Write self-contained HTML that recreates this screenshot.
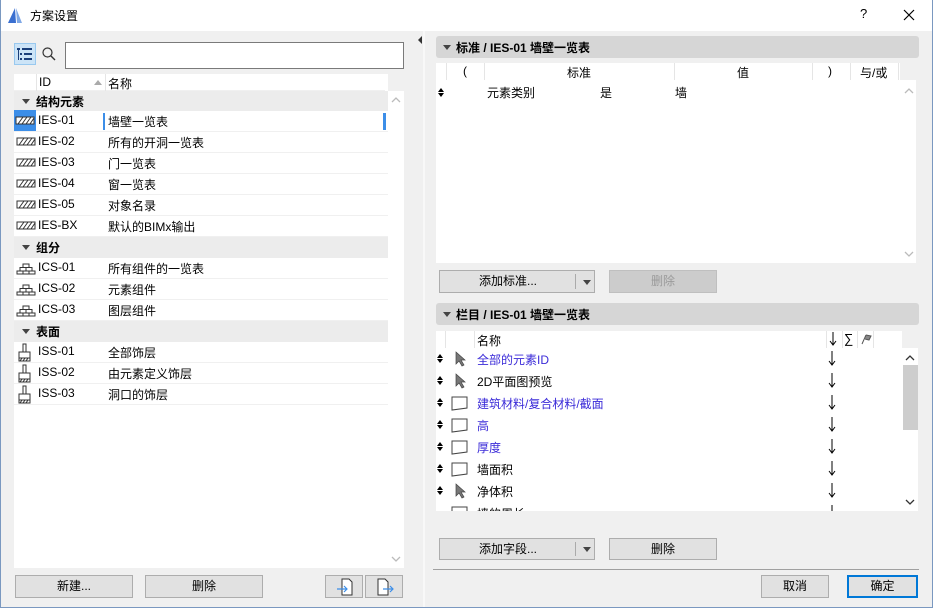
<!DOCTYPE html>
<html><head><meta charset="utf-8"><style>
*{box-sizing:border-box;margin:0;padding:0}
body{width:933px;height:608px;overflow:hidden;background:#f0f0f0;font-family:"Liberation Sans","Noto Sans CJK SC",sans-serif;font-size:12px;color:#000;position:relative}
.a{position:absolute}
.win{position:absolute;left:0;top:0;width:933px;height:608px;border:1px solid #7a98c0;border-top:none}
.title{left:0;top:0;width:933px;height:31px;background:#fff}
.white{background:#fff}
.row{position:absolute;left:14px;width:374px;height:21px;border-bottom:1px solid #f0f0f0;background:#fff}
.row .id{position:absolute;left:24px;top:2px}
.row .nm{position:absolute;left:94px;top:2px}
.row .ic{position:absolute;left:2px;top:5px}
.cat{position:absolute;left:14px;width:374px;height:21px;background:#ececec;font-weight:bold}
.cat span{position:absolute;left:22px;top:2px}
.tri{position:absolute;width:0;height:0;border-left:4px solid transparent;border-right:4px solid transparent;border-top:5px solid #444}
.btn{position:absolute;background:#e1e1e1;border:1px solid #adadad;text-align:center;line-height:21px}
.hdr{position:absolute;left:436px;width:483px;height:22px;background:#d6d6d6;border-radius:3px;font-weight:bold}
.hdr span{position:absolute;left:20px;top:3px}
.r2{position:absolute;left:451px;height:22px;width:449px}
.r2 .ud{position:absolute;left:-14px;top:6px}
.r2 .t{position:absolute;left:26px;top:3px}
.r2 .dn{position:absolute;left:377px;top:3px}
.blue{color:#3a2ad8}
</style></head><body>
<div class="a title"></div>
<svg class="a" style="left:6px;top:6px" width="18" height="18"><path d="M2 17 L9 2 L10 17Z" fill="#3a6fd0"/><path d="M10 2 L16 17 L11 17Z" fill="#7fa8e6"/></svg>
<div class="a" style="left:30px;top:7px;font-size:12px">方案设置</div>
<div class="a" style="left:860px;top:6px;font-size:13px">?</div>
<svg class="a" style="left:903px;top:9px" width="12" height="12"><path d="M1 1L11 11M11 1L1 11" stroke="#000" stroke-width="1.2"/></svg>

<div class="a" style="left:14px;top:43px;width:22px;height:22px;background:#cce4f7;border:1px solid #99c9ef"></div>
<svg class="a" style="left:16px;top:46px" width="18" height="16"><g fill="#1a3f7a"><rect x="1" y="2" width="3" height="2"/><rect x="6" y="2" width="10" height="2"/><rect x="4" y="7" width="2" height="2"/><rect x="8" y="7" width="8" height="2"/><rect x="4" y="12" width="2" height="2"/><rect x="8" y="12" width="8" height="2"/><rect x="2" y="4" width="1" height="10"/></g></svg>
<svg class="a" style="left:41px;top:46px" width="16" height="16"><circle cx="6.5" cy="6.5" r="4.5" fill="none" stroke="#333" stroke-width="1.2"/><path d="M10 10L14 14" stroke="#333" stroke-width="1.4"/></svg>
<div class="a white" style="left:65px;top:42px;width:339px;height:27px;border:1px solid #7a7a7a"></div>

<div class="a white" style="left:14px;top:74px;width:374px;height:494px"></div>
<div class="a" style="left:14px;top:74px;width:371px;height:17px;background:#fff;border-bottom:1px solid #f0f0f0"></div>
<div class="a" style="left:36px;top:74px;width:1px;height:17px;background:#e5e5e5"></div>
<div class="a" style="left:105px;top:74px;width:1px;height:17px;background:#e5e5e5"></div>
<div class="a" style="left:39px;top:75px">ID</div>
<div class="a" style="left:94px;top:80px;width:0;height:0;border-left:4px solid transparent;border-right:4px solid transparent;border-bottom:5px solid #aaa"></div>
<div class="a" style="left:108px;top:75px">名称</div>
<div class="a" style="left:388px;top:91px;width:16px;height:477px;background:#fff"></div>
<svg class="a" style="left:391px;top:96px" width="10" height="8"><path d="M1 6l4-4 4 4" fill="none" stroke="#bbb" stroke-width="1.3"/></svg>
<svg class="a" style="left:391px;top:555px" width="10" height="8"><path d="M1 2l4 4 4-4" fill="none" stroke="#bbb" stroke-width="1.3"/></svg>

<div class="cat" style="top:91px"><div class="tri" style="left:8px;top:8px"></div><span>结构元素</span></div>
<div class="row" style="top:111px"><svg class="ic" style="left:0;top:-1px" width="22" height="21"><rect width="22" height="21" fill="#3c8ee8"/><rect x="2" y="7" width="18" height="7" fill="#fff" stroke="#333"/><path d="M4 14l5-7M8 14l5-7M12 14l5-7M16 14l4-6" stroke="#333"/></svg><span class="id">IES-01</span><div class="a" style="left:89px;top:2px;width:2px;height:17px;background:#3c8ee8"></div><div class="a" style="left:369px;top:2px;width:3px;height:17px;background:#3c8ee8"></div><span class="nm">墙壁一览表</span></div>
<div class="row" style="top:132px"><svg class="ic" width="20" height="10"><rect x="1" y="1" width="18" height="7" fill="#fff" stroke="#333"/><path d="M3 8l5-7M7 8l5-7M11 8l5-7M15 8l4-6" stroke="#333"/></svg><span class="id">IES-02</span><span class="nm">所有的开洞一览表</span></div>
<div class="row" style="top:153px"><svg class="ic" width="20" height="10"><rect x="1" y="1" width="18" height="7" fill="#fff" stroke="#333"/><path d="M3 8l5-7M7 8l5-7M11 8l5-7M15 8l4-6" stroke="#333"/></svg><span class="id">IES-03</span><span class="nm">门一览表</span></div>
<div class="row" style="top:174px"><svg class="ic" width="20" height="10"><rect x="1" y="1" width="18" height="7" fill="#fff" stroke="#333"/><path d="M3 8l5-7M7 8l5-7M11 8l5-7M15 8l4-6" stroke="#333"/></svg><span class="id">IES-04</span><span class="nm">窗一览表</span></div>
<div class="row" style="top:195px"><svg class="ic" width="20" height="10"><rect x="1" y="1" width="18" height="7" fill="#fff" stroke="#333"/><path d="M3 8l5-7M7 8l5-7M11 8l5-7M15 8l4-6" stroke="#333"/></svg><span class="id">IES-05</span><span class="nm">对象名录</span></div>
<div class="row" style="top:216px"><svg class="ic" width="20" height="10"><rect x="1" y="1" width="18" height="7" fill="#fff" stroke="#333"/><path d="M3 8l5-7M7 8l5-7M11 8l5-7M15 8l4-6" stroke="#333"/></svg><span class="id">IES-BX</span><span class="nm">默认的BIMx输出</span></div>
<div class="cat" style="top:237px"><div class="tri" style="left:8px;top:8px"></div><span>组分</span></div>
<div class="row" style="top:258px"><svg class="ic" width="20" height="12"><path d="M7 1h6v3.5H7zM4 4.5h12v3.5H4zM1 8h18v3H1zM10 4.5v3.5M7 8v3M13 8v3" fill="none" stroke="#333"/></svg><span class="id">ICS-01</span><span class="nm">所有组件的一览表</span></div>
<div class="row" style="top:279px"><svg class="ic" width="20" height="12"><path d="M7 1h6v3.5H7zM4 4.5h12v3.5H4zM1 8h18v3H1zM10 4.5v3.5M7 8v3M13 8v3" fill="none" stroke="#333"/></svg><span class="id">ICS-02</span><span class="nm">元素组件</span></div>
<div class="row" style="top:300px"><svg class="ic" width="20" height="12"><path d="M7 1h6v3.5H7zM4 4.5h12v3.5H4zM1 8h18v3H1zM10 4.5v3.5M7 8v3M13 8v3" fill="none" stroke="#333"/></svg><span class="id">ICS-03</span><span class="nm">图层组件</span></div>
<div class="cat" style="top:321px"><div class="tri" style="left:8px;top:8px"></div><span>表面</span></div>
<div class="row" style="top:342px"><svg class="ic" style="top:1px" width="20" height="20"><path d="M7 1h3v8H7zM3 9h11v6H3zM3 15h11v3H3z" fill="#fff" stroke="#333"/><path d="M4 18l2-3M7 18l2-3M10 18l2-3" stroke="#333"/></svg><span class="id">ISS-01</span><span class="nm">全部饰层</span></div>
<div class="row" style="top:363px"><svg class="ic" style="top:1px" width="20" height="20"><path d="M7 1h3v8H7zM3 9h11v6H3zM3 15h11v3H3z" fill="#fff" stroke="#333"/><path d="M4 18l2-3M7 18l2-3M10 18l2-3" stroke="#333"/></svg><span class="id">ISS-02</span><span class="nm">由元素定义饰层</span></div>
<div class="row" style="top:384px"><svg class="ic" style="top:1px" width="20" height="20"><path d="M7 1h3v8H7zM3 9h11v6H3zM3 15h11v3H3z" fill="#fff" stroke="#333"/><path d="M4 18l2-3M7 18l2-3M10 18l2-3" stroke="#333"/></svg><span class="id">ISS-03</span><span class="nm">洞口的饰层</span></div>

<div class="btn" style="left:15px;top:575px;width:118px;height:23px">新建...</div>
<div class="btn" style="left:145px;top:575px;width:118px;height:23px">删除</div>
<div class="btn" style="left:325px;top:575px;width:38px;height:23px"><svg style="position:absolute;left:9px;top:2px" width="20" height="18"><path d="M7 1h7l3 3v13H7z" fill="#fff" stroke="#333"/><path d="M2 11h10M9 8l3 3-3 3" fill="none" stroke="#3c8ee8" stroke-width="1.2"/></svg></div>
<div class="btn" style="left:365px;top:575px;width:38px;height:23px"><svg style="position:absolute;left:9px;top:2px" width="20" height="18"><path d="M3 1h7l3 3v13H3z" fill="#fff" stroke="#333"/><path d="M8 11h10M15 8l3 3-3 3" fill="none" stroke="#3c8ee8" stroke-width="1.2"/></svg></div>

<div class="a" style="left:423px;top:31px;width:2px;height:577px;background:#f8f8f8"></div>
<div class="a" style="left:418px;top:36px;width:0;height:0;border-top:4px solid transparent;border-bottom:4px solid transparent;border-right:4px solid #333"></div>

<div class="hdr" style="top:36px"><div class="tri" style="left:7px;top:9px"></div><span>标准 / IES-01 墙壁一览表</span></div>
<div class="a white" style="left:436px;top:63px;width:464px;height:200px"></div>
<div class="a white" style="left:900px;top:80px;width:16px;height:183px"></div>
<svg class="a" style="left:904px;top:87px" width="10" height="8"><path d="M1 6l4-4 4 4" fill="none" stroke="#bbb" stroke-width="1.3"/></svg>
<svg class="a" style="left:904px;top:250px" width="10" height="8"><path d="M1 2l4 4 4-4" fill="none" stroke="#bbb" stroke-width="1.3"/></svg>
<div class="a" style="left:446px;top:63px;width:453px;height:17px;background:#fff"></div>
<div class="a" style="left:446px;top:63px;width:1px;height:17px;background:#e5e5e5"></div>
<div class="a" style="left:484px;top:63px;width:1px;height:17px;background:#e5e5e5"></div>
<div class="a" style="left:674px;top:63px;width:1px;height:17px;background:#e5e5e5"></div>
<div class="a" style="left:812px;top:63px;width:1px;height:17px;background:#e5e5e5"></div>
<div class="a" style="left:850px;top:63px;width:1px;height:17px;background:#e5e5e5"></div>
<div class="a" style="left:898px;top:63px;width:1px;height:17px;background:#e5e5e5"></div>
<div class="a" style="left:463px;top:64px">(</div>
<div class="a" style="left:567px;top:64px">标准</div>
<div class="a" style="left:737px;top:64px">值</div>
<div class="a" style="left:828px;top:64px">)</div>
<div class="a" style="left:860px;top:64px">与/或</div>
<svg class="a" style="left:438px;top:88px" width="6" height="9"><path d="M0 4L3 0L6 4ZM0 5L3 9L6 5Z" fill="#000"/></svg>
<div class="a" style="left:487px;top:84px">元素类别</div>
<div class="a" style="left:600px;top:84px">是</div>
<div class="a" style="left:675px;top:84px">墙</div>

<div class="btn" style="left:439px;top:270px;width:156px;height:23px"><span style="position:absolute;left:0;width:136px">添加标准...</span><div class="a" style="left:135px;top:3px;width:1px;height:15px;background:#aaa"></div><div class="tri" style="left:143px;top:9px"></div></div>
<div class="btn" style="left:609px;top:270px;width:108px;height:23px;background:#cccccc;border-color:#bfbfbf;color:#9a9a9a">删除</div>

<div class="hdr" style="top:303px"><div class="tri" style="left:7px;top:9px"></div><span>栏目 / IES-01 墙壁一览表</span></div>
<div class="a white" style="left:436px;top:331px;width:466px;height:180px"></div>
<div class="a white" style="left:902px;top:348px;width:16px;height:163px"></div>
<div class="a" style="left:903px;top:365px;width:15px;height:65px;background:#cdcdcd"></div>
<svg class="a" style="left:905px;top:354px" width="10" height="8"><path d="M1 6l4-4 4 4" fill="none" stroke="#333" stroke-width="1.3"/></svg>
<svg class="a" style="left:905px;top:498px" width="10" height="8"><path d="M1 2l4 4 4-4" fill="none" stroke="#333" stroke-width="1.3"/></svg>
<div class="a" style="left:445px;top:331px;width:1px;height:17px;background:#e5e5e5"></div>
<div class="a" style="left:474px;top:331px;width:1px;height:17px;background:#e5e5e5"></div>
<div class="a" style="left:826px;top:331px;width:1px;height:17px;background:#e5e5e5"></div>
<div class="a" style="left:842px;top:331px;width:1px;height:17px;background:#e5e5e5"></div>
<div class="a" style="left:857px;top:331px;width:1px;height:17px;background:#e5e5e5"></div>
<div class="a" style="left:873px;top:331px;width:1px;height:17px;background:#e5e5e5"></div>
<div class="a" style="left:477px;top:332px">名称</div>
<svg class="a" style="left:829px;top:332px" width="8" height="14"><path d="M4 0v13M1 9l3 4 3-4" fill="none" stroke="#000"/></svg>
<div class="a" style="left:844px;top:331px;font-size:13px">∑</div>
<svg class="a" style="left:860px;top:333px" width="12" height="12"><path d="M2 11L6 2M6 2l5 1-2 4-4-1" fill="#888" stroke="#555"/></svg>

<div class="r2" style="top:348px"><svg class="ud" width="6" height="9"><path d="M0 4L3 0L6 4ZM0 5L3 9L6 5Z" fill="#000"/></svg><svg class="a" style="left:3px;top:3px" width="12" height="16"><path d="M2 1v12l3-3 3 5 2-1-3-5h4z" fill="#777" stroke="#444" stroke-width=".7"/></svg><span class="t blue">全部的元素ID</span><svg class="dn" width="8" height="15"><path d="M4 0v14M1 10l3 4 3-4" fill="none" stroke="#000"/></svg></div>
<div class="r2" style="top:370px"><svg class="ud" width="6" height="9"><path d="M0 4L3 0L6 4ZM0 5L3 9L6 5Z" fill="#000"/></svg><svg class="a" style="left:3px;top:3px" width="12" height="16"><path d="M2 1v12l3-3 3 5 2-1-3-5h4z" fill="#777" stroke="#444" stroke-width=".7"/></svg><span class="t">2D平面图预览</span><svg class="dn" width="8" height="15"><path d="M4 0v14M1 10l3 4 3-4" fill="none" stroke="#000"/></svg></div>
<div class="r2" style="top:392px"><svg class="ud" width="6" height="9"><path d="M0 4L3 0L6 4ZM0 5L3 9L6 5Z" fill="#000"/></svg><svg class="a" style="left:0;top:3px" width="18" height="16"><path d="M1 2h15v11L1 15z" fill="#fff" stroke="#444"/></svg><span class="t blue">建筑材料/复合材料/截面</span><svg class="dn" width="8" height="15"><path d="M4 0v14M1 10l3 4 3-4" fill="none" stroke="#000"/></svg></div>
<div class="r2" style="top:414px"><svg class="ud" width="6" height="9"><path d="M0 4L3 0L6 4ZM0 5L3 9L6 5Z" fill="#000"/></svg><svg class="a" style="left:0;top:3px" width="18" height="16"><path d="M1 2h15v11L1 15z" fill="#fff" stroke="#444"/></svg><span class="t blue">高</span><svg class="dn" width="8" height="15"><path d="M4 0v14M1 10l3 4 3-4" fill="none" stroke="#000"/></svg></div>
<div class="r2" style="top:436px"><svg class="ud" width="6" height="9"><path d="M0 4L3 0L6 4ZM0 5L3 9L6 5Z" fill="#000"/></svg><svg class="a" style="left:0;top:3px" width="18" height="16"><path d="M1 2h15v11L1 15z" fill="#fff" stroke="#444"/></svg><span class="t blue">厚度</span><svg class="dn" width="8" height="15"><path d="M4 0v14M1 10l3 4 3-4" fill="none" stroke="#000"/></svg></div>
<div class="r2" style="top:458px"><svg class="ud" width="6" height="9"><path d="M0 4L3 0L6 4ZM0 5L3 9L6 5Z" fill="#000"/></svg><svg class="a" style="left:0;top:3px" width="18" height="16"><path d="M1 2h15v11L1 15z" fill="#fff" stroke="#444"/></svg><span class="t">墙面积</span><svg class="dn" width="8" height="15"><path d="M4 0v14M1 10l3 4 3-4" fill="none" stroke="#000"/></svg></div>
<div class="r2" style="top:480px"><svg class="ud" width="6" height="9"><path d="M0 4L3 0L6 4ZM0 5L3 9L6 5Z" fill="#000"/></svg><svg class="a" style="left:3px;top:3px" width="12" height="16"><path d="M2 1v12l3-3 3 5 2-1-3-5h4z" fill="#777" stroke="#444" stroke-width=".7"/></svg><span class="t">净体积</span><svg class="dn" width="8" height="15"><path d="M4 0v14M1 10l3 4 3-4" fill="none" stroke="#000"/></svg></div>
<div class="r2" style="top:502px;height:9px;overflow:hidden"><svg class="ud" width="6" height="9"><path d="M0 4L3 0L6 4ZM0 5L3 9L6 5Z" fill="#000"/></svg><svg class="a" style="left:0;top:3px" width="18" height="16"><path d="M1 2h15v11L1 15z" fill="#fff" stroke="#444"/></svg><span class="t">墙的周长</span><svg class="dn" width="8" height="15"><path d="M4 0v14M1 10l3 4 3-4" fill="none" stroke="#000"/></svg></div>

<div class="btn" style="left:439px;top:538px;width:156px;height:22px;line-height:20px"><span style="position:absolute;left:0;width:136px">添加字段...</span><div class="a" style="left:135px;top:3px;width:1px;height:14px;background:#aaa"></div><div class="tri" style="left:143px;top:8px"></div></div>
<div class="btn" style="left:609px;top:538px;width:108px;height:22px;line-height:20px">删除</div>
<div class="a" style="left:433px;top:569px;width:486px;height:1px;background:#a0a0a0"></div>
<div class="btn" style="left:761px;top:575px;width:68px;height:23px">取消</div>
<div class="btn" style="left:847px;top:575px;width:71px;height:23px;border:2px solid #0078d7;line-height:19px">确定</div>
<div class="win"></div>
</body></html>
